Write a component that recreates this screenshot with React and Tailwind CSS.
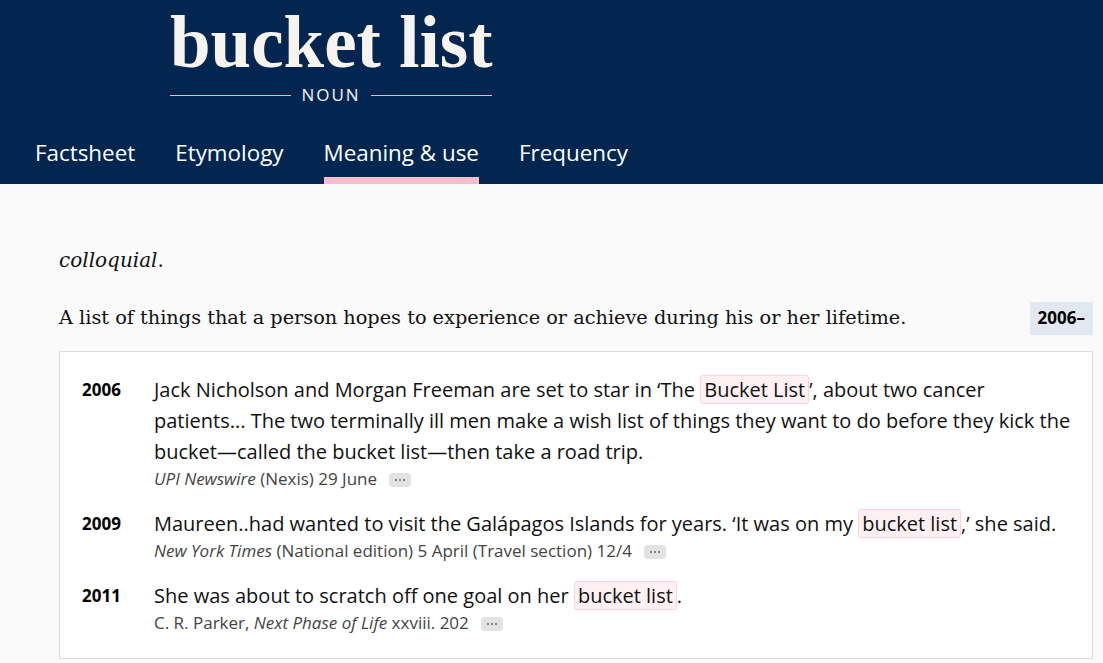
import React from 'react';

const SANS = { fontFamily: '"Open Sans", "Liberation Sans", sans-serif' };
const SERIF = { fontFamily: '"DejaVu Serif", "Liberation Serif", serif' };

const quotes = [
  {
    year: '2006',
    text: ['Jack Nicholson and Morgan Freeman are set to star in \u2018The ', 'Bucket List', '\u2019, about two cancer patients... The two terminally ill men make a wish list of things they want to do before they kick the bucket\u2014called the bucket list\u2014then take a road trip.'],
    cite: (<><i>UPI Newswire</i> (Nexis) 29 June</>),
  },
  {
    year: '2009',
    text: ['Maureen..had wanted to visit the Gal\u00e1pagos Islands for years. \u2018It was on my ', 'bucket list', ',\u2019 she said.'],
    cite: (<><i>New York Times</i> (National edition) 5 April (Travel section) 12/4</>),
  },
  {
    year: '2011',
    text: ['She was about to scratch off one goal on her ', 'bucket list', '.'],
    cite: (<>C. R. Parker, <i>Next Phase of Life</i> xxviii. 202</>),
  },
];

function Dots() {
  return (
    <span className="inline-flex items-center justify-center gap-[2px] w-[22px] h-[14px] ml-3 align-middle rounded-sm bg-[#e2e2e2]">
      <span className="w-[2px] h-[2px] rounded-full bg-[#666]" />
      <span className="w-[2px] h-[2px] rounded-full bg-[#666]" />
      <span className="w-[2px] h-[2px] rounded-full bg-[#666]" />
    </span>
  );
}

export default function App() {
  const tabs = ['Factsheet', 'Etymology', 'Meaning & use', 'Frequency'];
  return (
    <div className="min-h-screen bg-[#fafafa]" style={SANS}>
      {/* Header */}
      <div className="bg-[#02264f] h-[184px] flex flex-col">
        <div className="ml-[170px] w-[322px] pt-[7px]">
          <h1 className="text-[73px] leading-[72px] font-bold whitespace-nowrap text-[#f7f3ee]" style={{ fontFamily: '"Liberation Serif", serif' }}>
            bucket list
          </h1>
          <div className="flex items-center mt-[4px]">
            <div className="flex-1 h-px bg-[#f4b6c2]" />
            <span className="px-[10px] text-[17px] tracking-[2px] text-[#f1f5f9] leading-6">NOUN</span>
            <div className="flex-1 h-px bg-[#f4b6c2]" />
          </div>
        </div>
        <nav className="flex gap-10 pl-[35px] mt-auto">
          {tabs.map(t => (
            <div key={t} className="flex flex-col">
              <span className="text-[22.4px] leading-[30px] text-white pb-[9px]">{t}</span>
              <span className={`h-[7px] ${t === 'Meaning & use' ? 'bg-[#fbbdcb]' : ''}`} />
            </div>
          ))}
        </nav>
      </div>

      {/* Content */}
      <div className="pl-[59px] pr-[10px] pt-[62px]">
        <p className="text-[20px] leading-[28px] text-[#111]" style={SERIF}>
          <i>colloquial</i>.
        </p>
        <div className="flex items-center justify-between mt-[27px]">
          <p className="text-[19.3px] leading-[34px] text-[#111]" style={SERIF}>
            A list of things that a person hopes to experience or achieve during his or her lifetime.
          </p>
          <span className="bg-[#e2e8f0] px-[8px] h-[33px] flex items-center text-[17px] font-bold text-black">2006&ndash;</span>
        </div>

        <div className="mt-[16px] bg-white border border-[#d5dde6] pl-[22px] pr-[16px] pt-[22px] pb-[23px] flex flex-col gap-[17px]">
          {quotes.map(q => (
            <div key={q.year} className="flex">
              <div className="w-[72px] shrink-0 text-[17px] font-bold leading-[31px] text-black">{q.year}</div>
              <div className="flex-1">
                <p className="text-[20px] leading-[31px] text-[#111]">
                  {q.text[0]}
                  <span className="bg-[#fff0f3] border border-[#fbd3db] rounded-[3px] px-[3px]">{q.text[1]}</span>
                  {q.text[2]}
                </p>
                <p className="text-[17px] leading-[24px] text-[#444]">
                  {q.cite}
                  <Dots />
                </p>
              </div>
            </div>
          ))}
        </div>
      </div>
    </div>
  );
}
